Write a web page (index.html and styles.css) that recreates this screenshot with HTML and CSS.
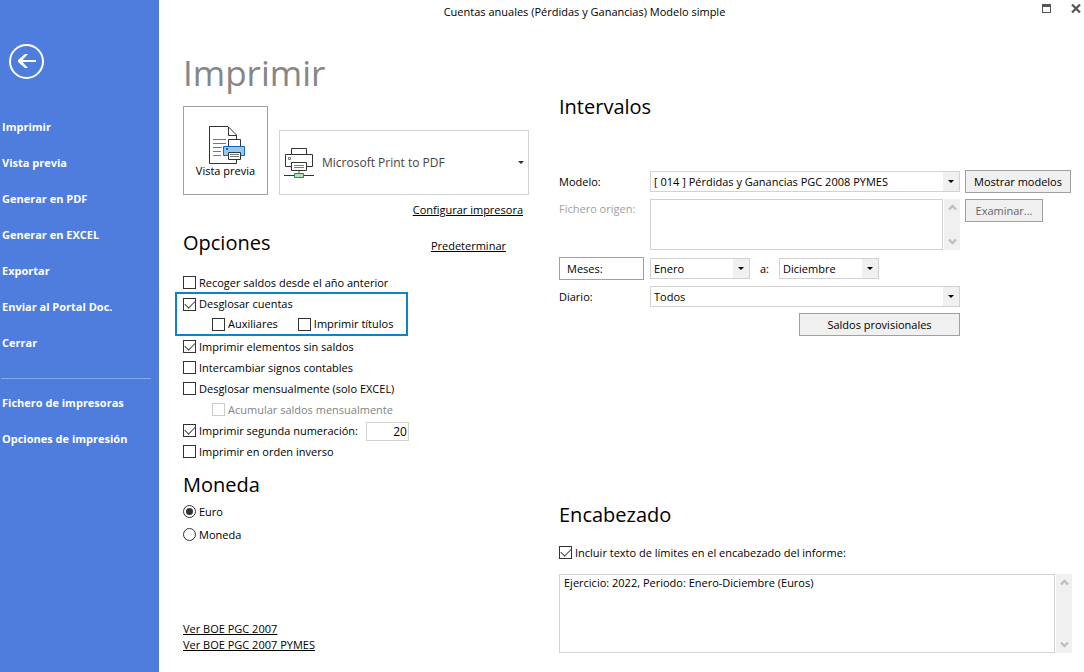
FILE: index.html
```html
<!DOCTYPE html>
<html lang="es">
<head>
<meta charset="utf-8">
<meta name="viewport" content="width=device-width, initial-scale=1">
<title>Cuentas anuales (Pérdidas y Ganancias) Modelo simple</title>
<link rel="stylesheet" href="styles.css">
</head>
<body>
<div class="app">
  <nav class="sidebar" aria-label="Archivo">
    <button class="back" type="button" aria-label="Volver">
      <svg width="35" height="35" viewBox="0 0 35 35" fill="none" stroke="#fff">
        <circle cx="17.500" cy="17.500" r="16.500" stroke-width="2"/>
        <path d="M27 17H11" stroke-width="2"/>
        <path d="M19 10h-3L9 16v2l7 6h3L13.500 18v-2L19 10z" fill="#fff" stroke="none"/>
      </svg>
    </button>
    <ul class="menu">
      <li><a href="#">Imprimir</a></li>
      <li><a href="#">Vista previa</a></li>
      <li><a href="#">Generar en PDF</a></li>
      <li><a href="#">Generar en EXCEL</a></li>
      <li><a href="#">Exportar</a></li>
      <li><a href="#">Enviar al Portal Doc.</a></li>
      <li><a href="#">Cerrar</a></li>
    </ul>
    <ul class="menu menu-extra">
      <li><a href="#">Fichero de impresoras</a></li>
      <li><a href="#">Opciones de impresión</a></li>
    </ul>
  </nav>

  <div class="window">
    <header class="titlebar">
      <span class="window-title">Cuentas anuales (Pérdidas y Ganancias) Modelo simple</span>
      <div class="window-buttons">
        <button type="button" aria-label="Maximizar">
          <svg width="9" height="9" viewBox="0 0 9 9" shape-rendering="crispEdges"><path d="M0 0h9v9H0zM1 3v5h7V3z" fill="#555" fill-rule="evenodd"/></svg>
        </button>
        <button type="button" aria-label="Cerrar">
          <svg width="10" height="9" viewBox="0 0 10 9"><path d="M1 .5l8 8M9 .5l-8 8" stroke="#555" stroke-width="2.200"/></svg>
        </button>
      </div>
    </header>

    <main class="content">
      <section class="print">
        <h1>Imprimir</h1>
        <div class="devices">
          <button class="preview" type="button">
            <svg width="37" height="38" viewBox="0 0 37 38" fill="none">
              <path d="M19 .5H.5v37h27v-4M19 .5l8.500 8.500V13" stroke="#333"/>
              <path d="M19.500 1v8.500H27" stroke="#333"/>
              <path d="M4 13.500h13M4 17.500h13M4 21.500h9M4 25.500h8M4 29.500h8" stroke="#777"/>
              <path d="M19.500 20v-6.500h12V20" fill="#fff" stroke="#333"/>
              <path d="M14.500 20.500h21v9h-21z" fill="#91c9f0" stroke="#1566b0"/>
              <path d="M17 22h2v2h-2z" fill="#1566b0"/>
              <path d="M19.500 26.500h12v7h-12z" fill="#fff" stroke="#333"/>
              <path d="M21 28.500h9M21 30.500h9" stroke="#777"/>
            </svg>
            <span>Vista previa</span>
          </button>
          <button class="printer" type="button">
            <svg width="30" height="31" viewBox="0 0 30 31" fill="none">
              <path d="M7.500 7V1.500h15V7" stroke="#333"/>
              <path d="M7 19.500H1.500v-12h27v12H23" stroke="#333"/>
              <path d="M4.500 10.500h2v2h-2z" stroke="#777"/>
              <path d="M7.500 15.500h15v8h-15z" fill="#fff" stroke="#333"/>
              <path d="M10 18.500h10M10 20.500h10" stroke="#777"/>
              <path d="M14 24h2v2h-2z" fill="#aaa"/>
              <path d="M0 28.500h30" stroke="#333"/>
              <path d="M10.500 26.500h9v4h-9z" fill="#b8dfb8" stroke="#0a9d3d"/>
            </svg>
            <span class="printer-name">Microsoft Print to PDF</span>
            <span class="caret"></span>
          </button>
        </div>
        <p class="configure"><a href="#">Configurar impresora</a></p>

        <div class="heading-row">
          <h2>Opciones</h2>
          <a href="#">Predeterminar</a>
        </div>
        <div class="options">
          <label class="check"><input type="checkbox">Recoger saldos desde el año anterior</label>
          <div class="highlight">
            <label class="check"><input type="checkbox" checked>Desglosar cuentas</label>
            <div class="indented">
              <label class="check"><input type="checkbox">Auxiliares</label>
              <label class="check"><input type="checkbox">Imprimir títulos</label>
            </div>
          </div>
          <label class="check"><input type="checkbox" checked>Imprimir elementos sin saldos</label>
          <label class="check"><input type="checkbox">Intercambiar signos contables</label>
          <label class="check"><input type="checkbox">Desglosar mensualmente (solo EXCEL)</label>
          <div class="indented">
            <label class="check check-off"><input type="checkbox" disabled>Acumular saldos mensualmente</label>
          </div>
          <div class="numbering">
            <label class="check"><input type="checkbox" checked>Imprimir segunda numeración:</label>
            <input class="number" type="text" value="20" aria-label="Segunda numeración">
          </div>
          <label class="check"><input type="checkbox">Imprimir en orden inverso</label>
        </div>

        <h2 class="currency-title">Moneda</h2>
        <div class="currency">
          <label class="check"><input type="radio" name="moneda" checked>Euro</label>
          <label class="check"><input type="radio" name="moneda">Moneda</label>
        </div>

        <div class="links">
          <a href="#">Ver BOE PGC 2007</a>
          <a href="#">Ver BOE PGC 2007 PYMES</a>
        </div>
      </section>

      <section class="settings">
        <h2>Intervalos</h2>
        <div class="fields">
          <label for="modelo">Modelo:</label>
          <div class="select"><select id="modelo"><option>[ 014 ] Pérdidas y Ganancias PGC 2008 PYMES</option></select></div>
          <button class="button models" type="button">Mostrar modelos</button>

          <label class="off" for="fichero">Fichero origen:</label>
          <div class="scrollbox">
            <textarea id="fichero" disabled></textarea>
            <div class="scrollbar">
              <svg width="9" height="8" viewBox="0 0 9 8"><path d="M1 6.500L4.500 3 8 6.500" fill="none" stroke="#bfbfbf" stroke-width="2.400"/></svg>
              <svg width="9" height="8" viewBox="0 0 9 8"><path d="M1 1.500L4.500 5 8 1.500" fill="none" stroke="#bfbfbf" stroke-width="2.400"/></svg>
            </div>
          </div>
          <button class="button browse" type="button" disabled>Examinar...</button>

          <button class="button months" type="button">Meses:</button>
          <div class="range">
            <div class="select"><select aria-label="Mes inicial"><option>Enero</option></select></div>
            <label for="hasta">a:</label>
            <div class="select"><select id="hasta"><option>Diciembre</option></select></div>
          </div>

          <label class="first" for="diario">Diario:</label>
          <div class="select"><select id="diario"><option>Todos</option></select></div>

          <button class="button provisional" type="button">Saldos provisionales</button>
        </div>

        <div class="report-header">
          <h2>Encabezado</h2>
          <label class="check"><input type="checkbox" checked>Incluir texto de límites en el encabezado del informe:</label>
          <div class="scrollbox">
            <textarea aria-label="Texto del encabezado">Ejercicio: 2022, Periodo: Enero-Diciembre (Euros)</textarea>
            <div class="scrollbar">
              <svg width="9" height="8" viewBox="0 0 9 8"><path d="M1 6.500L4.500 3 8 6.500" fill="none" stroke="#bfbfbf" stroke-width="2.400"/></svg>
              <svg width="9" height="8" viewBox="0 0 9 8"><path d="M1 1.500L4.500 5 8 1.500" fill="none" stroke="#bfbfbf" stroke-width="2.400"/></svg>
            </div>
          </div>
        </div>
      </section>
    </main>
  </div>
</div>
</body>
</html>
```
FILE: styles.css
```css
* { box-sizing: border-box; }

body {
  margin: 0;
  background: #fff;
  color: #000;
  font: 11px/16px "Open Sans", "Noto Sans", sans-serif;
}

h1, h2, p, ul { margin: 0; padding: 0; }
h1, h2 { font-weight: 400; }
h1 { margin: 25px 0 9px; color: #868686; font-size: 35px; line-height: 48px; }
h2 { font-size: 20px; line-height: 32px; }
a { color: inherit; }
button, input, select, textarea { margin: 0; font: inherit; color: inherit; }
svg { display: block; flex: none; }

.app { display: grid; grid-template-columns: 159px 1fr; min-height: 100vh; }

/* Sidebar */
.sidebar { padding-top: 44px; background: #4e7ddd; color: #fff; }
.back { display: block; margin-left: 9px; padding: 0; border: 0; background: none; }
.menu { margin-top: 30px; list-style: none; }
.menu a {
  display: block;
  padding-left: 2px;
  font-weight: 700;
  line-height: 36px;
  text-decoration: none;
}
.menu-extra { margin: 17px 8px 0 1px; padding-top: 6px; border-top: 1px solid #86a7eb; }
.menu-extra a { padding-left: 1px; }

/* Window */
.window { display: flex; flex-direction: column; }
.titlebar { display: flex; height: 24px; padding-right: 3px; }
.window-title { flex: 1; padding-right: 32px; line-height: 24px; text-align: center; }
.window-buttons { display: flex; gap: 20px; align-items: flex-start; padding-top: 4px; }
.window-buttons button { padding: 0; border: 0; background: none; }

.content {
  display: grid;
  flex: 1;
  grid-template-columns: 346px 1fr;
  gap: 30px;
  padding: 0 12px 19px 24px;
}
.print, .settings { display: flex; flex-direction: column; }

.devices { display: flex; gap: 11px; align-items: flex-end; }
.preview {
  display: flex;
  flex-direction: column;
  align-items: center;
  width: 85px;
  height: 89px;
  padding: 19px 0 0;
  border: 1px solid #a0a0a0;
  background: #fff;
}
.preview svg { margin-left: 4px; }
.preview span { line-height: 14px; }
.printer {
  display: flex;
  flex: 1;
  align-items: center;
  height: 65px;
  padding: 0 4px;
  border: 1px solid #d2d2d2;
  background: #fff;
  color: #444;
  font-size: 12px;
  text-align: left;
}
.printer-name { flex: 1; padding-left: 8px; }
.caret { border: 3px solid transparent; border-top-color: #333; border-bottom: 0; }
.configure { margin-top: 7px; padding-right: 6px; text-align: right; }
.heading-row {
  display: flex;
  justify-content: space-between;
  margin: 9px 23px 13px 0;
}
.heading-row a { padding-top: 11px; }

/* Check boxes and radios */
.check { display: flex; align-items: center; gap: 3px; height: 21px; }
.check-off { color: #838383; }
.check input {
  display: grid;
  flex: none;
  place-items: center;
  width: 13px;
  height: 13px;
  border: 1px solid #333;
  background: #fff;
  appearance: none;
}
.check input[type="checkbox"]:checked::before {
  content: "";
  width: 9px;
  height: 5px;
  margin-bottom: 3px;
  border: solid #444;
  border-width: 0 0 1px 1px;
  transform: rotate(-45deg);
}
.check input:disabled { border-color: #ccc; }
.check input[type="radio"] { border-radius: 50%; }
.check input[type="radio"]:checked::before {
  content: "";
  width: 7px;
  height: 7px;
  border-radius: 50%;
  background: #333;
}
.highlight {
  width: 233px;
  margin: -1px 0 0 -8px;
  padding-left: 6px;
  border: 2px solid #0a84c6;
}
.highlight .check { height: 20px; }
.indented { display: flex; gap: 20px; padding-left: 29px; }
.numbering { display: flex; gap: 8px; height: 21px; }
.number {
  width: 43px;
  height: 19px;
  margin-top: 2px;
  padding: 0 1px;
  border: 1px solid #d2d2d2;
  font-size: 12px;
  text-align: right;
}
.currency-title { margin: 7px 0 -1px; }
.currency .check { height: 23px; }
.links { display: flex; flex-direction: column; align-items: flex-start; margin-top: auto; }

/* Range settings */
.settings > h2 { margin: 67px 0 47px; }
.fields {
  display: grid;
  grid-template-columns: 86px 1fr 107px;
  gap: 6px 5px;
  align-items: center;
}
.fields .off { align-self: start; margin-top: 2px; color: #a0a0a0; }
.fields .scrollbox { margin-bottom: 1px; }
.first { grid-column: 1; }
.button {
  height: 23px;
  padding: 0;
  border: 1px solid #a0a0a0;
  background: #f0f0f0;
  text-align: center;
}
.button:disabled { color: #666; }
.models { width: 106px; }
.browse { align-self: start; width: 78px; }
.months { width: 85px; padding-left: 7px; background: #fff; text-align: left; }
.provisional { grid-column: 2; justify-self: end; width: 161px; }
.select { position: relative; }
.select select {
  display: block;
  width: 100%;
  height: 21px;
  padding: 0 20px 0 3px;
  border: 1px solid #d2d2d2;
  border-radius: 0;
  background: linear-gradient(#f0f0f0, #f0f0f0) right / 16px 100% no-repeat #fff;
  appearance: none;
}
.select::after {
  content: "";
  position: absolute;
  top: 9px;
  right: 6px;
  border: 3px solid transparent;
  border-top-color: #000;
  border-bottom: 0;
  pointer-events: none;
}
.range { display: flex; gap: 10px; align-items: center; }
.range .select { width: 100px; }

.scrollbox { display: flex; gap: 1px; height: 51px; }
.scrollbox textarea {
  flex: 1;
  min-width: 0;
  padding: 0 4px;
  border: 1px solid #d2d2d2;
  background: #fff;
  overflow: hidden;
  resize: none;
}
.scrollbar {
  display: flex;
  flex-direction: column;
  align-items: center;
  justify-content: space-between;
  width: 16px;
  padding: 4px 0;
  background: #f0f0f0;
}
.report-header { margin-top: auto; }
.report-header .check { margin: 11px 0; }
.report-header .scrollbox { height: 79px; }
```
